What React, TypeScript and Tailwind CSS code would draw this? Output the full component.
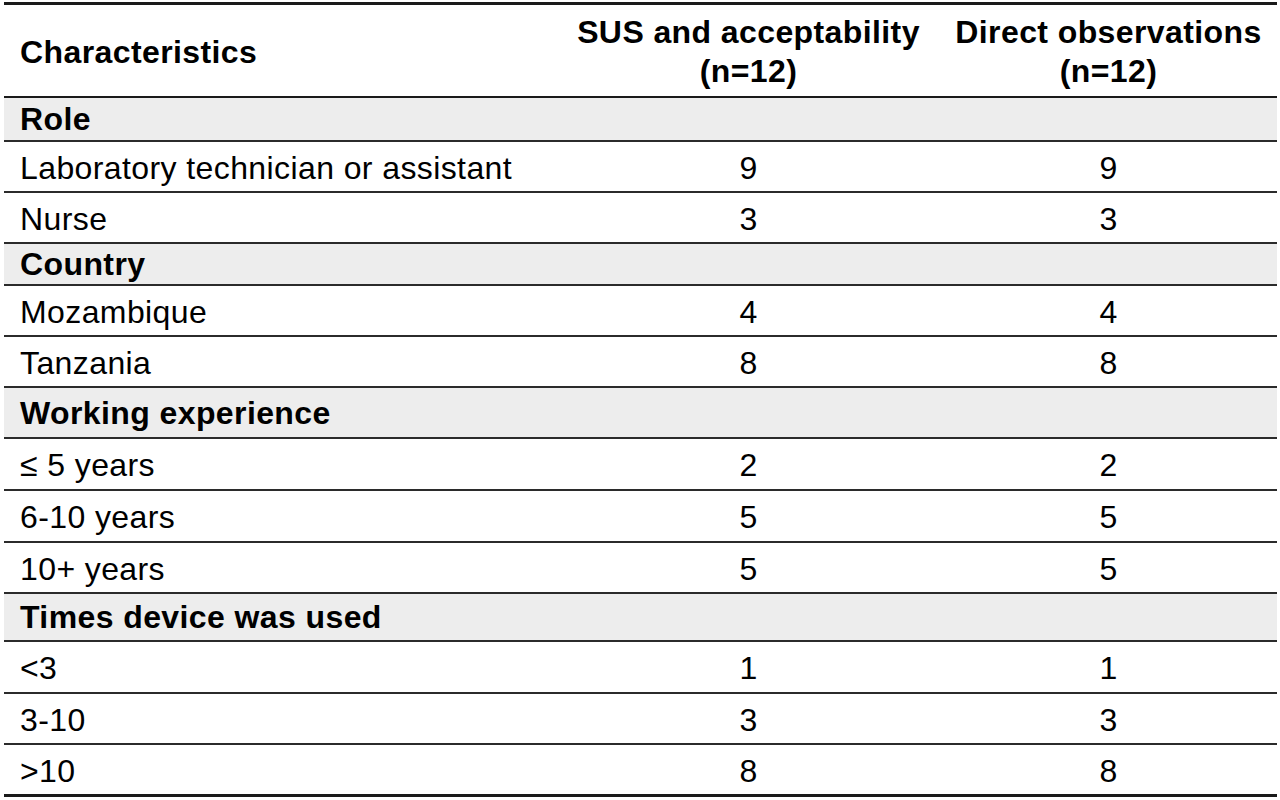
type Row =
  | { kind: "group"; label: string; h: string }
  | { kind: "data"; label: string; sus: string; obs: string; h?: string };

const rows: Row[] = [
  { kind: "group", label: "Role", h: "h-[44px]" },
  { kind: "data", label: "Laboratory technician or assistant", sus: "9", obs: "9" },
  { kind: "data", label: "Nurse", sus: "3", obs: "3" },
  { kind: "group", label: "Country", h: "h-[42px]" },
  { kind: "data", label: "Mozambique", sus: "4", obs: "4" },
  { kind: "data", label: "Tanzania", sus: "8", obs: "8" },
  { kind: "group", label: "Working experience", h: "h-[51px]" },
  { kind: "data", label: "\u2264 5 years", sus: "2", obs: "2", h: "h-[52px]" },
  { kind: "data", label: "6-10 years", sus: "5", obs: "5", h: "h-[52px]" },
  { kind: "data", label: "10+ years", sus: "5", obs: "5" },
  { kind: "group", label: "Times device was used", h: "h-[48px]" },
  { kind: "data", label: "<3", sus: "1", obs: "1", h: "h-[52px]" },
  { kind: "data", label: "3-10", sus: "3", obs: "3" },
  { kind: "data", label: ">10", sus: "8", obs: "8" },
];

const cols = "grid grid-cols-[553px_383px_337px]";

export default function App() {
  return (
    <div className="min-h-[800px] bg-white pt-[2px] pl-[4px] font-['Liberation_Sans',Arial,sans-serif] text-[32px] tracking-[0.4px] text-black">
      <div className="w-[1273px] border-t-[3px] border-b-[3px] border-[#1a1a1a]">
        {/* Header */}
        <div className={`${cols} h-[93px] border-b-[2px] border-[#1a1a1a] pt-[3px] font-bold leading-[39px]`}>
          <div className="flex items-center pl-[16px]">Characteristics</div>
          <div className="flex flex-col items-center justify-center text-center">
            <span>SUS and acceptability</span>
            <span>(n=12)</span>
          </div>
          <div className="flex flex-col items-center justify-center text-center">
            <span>Direct observations</span>
            <span>(n=12)</span>
          </div>
        </div>

        {rows.map((row, idx) => {
          const last = idx === rows.length - 1;
          if (row.kind === "group") {
            return (
              <div
                key={idx}
                className={`${row.h} flex items-center border-b-[2px] border-[#2b2b2b] bg-[#ededed] pl-[16px] font-bold leading-none`}
              >
                {row.label}
              </div>
            );
          }
          return (
            <div
              key={idx}
              className={`${cols} items-center pt-[2px] leading-none ${
                last
                  ? "h-[49px]"
                  : `${row.h ?? "h-[51px]"} border-b-[2px] border-[#2b2b2b]`
              }`}
            >
              <div className="pl-[16px]">{row.label}</div>
              <div className="text-center">{row.sus}</div>
              <div className="text-center">{row.obs}</div>
            </div>
          );
        })}
      </div>
    </div>
  );
}
